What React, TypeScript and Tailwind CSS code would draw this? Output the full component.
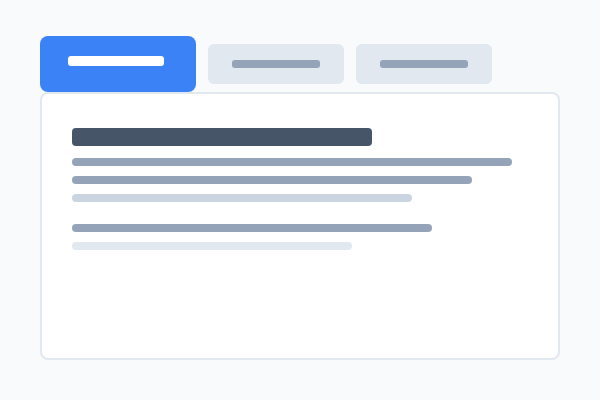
const Line = ({ w, color }: { w: string; color: string }) => (
  <div className={`h-2 rounded-sm ${w} ${color}`} />
);

export default function App() {
  return (
    <div className="min-h-[400px] w-[600px] bg-[#f8fafc] pl-10 pt-9">
      <div className="w-[520px]">
        {/* Tabs */}
        <div className="flex items-center gap-3">
          <div className="h-[56px] w-[156px] rounded-lg bg-[#3b82f6] pl-[28px] pt-[20px]">
            <div className="h-[10px] w-[96px] rounded-[3px] bg-white" />
          </div>
          <div className="flex h-10 w-[136px] items-center justify-center rounded-md bg-[#e2e8f0]">
            <div className="h-2 w-[88px] rounded-[3px] bg-[#94a3b8]" />
          </div>
          <div className="flex h-10 w-[136px] items-center justify-center rounded-md bg-[#e2e8f0]">
            <div className="h-2 w-[88px] rounded-[3px] bg-[#94a3b8]" />
          </div>
        </div>

        {/* Panel */}
        <div className="h-[268px] rounded-lg border-2 border-[#e2e8f0] bg-white pl-[30px] pt-[34px]">
          <div className="h-[18px] w-[300px] rounded bg-[#475569]" />
          <div className="mt-3 flex flex-col gap-[10px]">
            <Line w="w-[440px]" color="bg-[#94a3b8]" />
            <Line w="w-[400px]" color="bg-[#94a3b8]" />
            <Line w="w-[340px]" color="bg-[#cbd5e1]" />
          </div>
          <div className="mt-[22px] flex flex-col gap-[10px]">
            <Line w="w-[360px]" color="bg-[#94a3b8]" />
            <Line w="w-[280px]" color="bg-[#e2e8f0]" />
          </div>
        </div>
      </div>
    </div>
  );
}
